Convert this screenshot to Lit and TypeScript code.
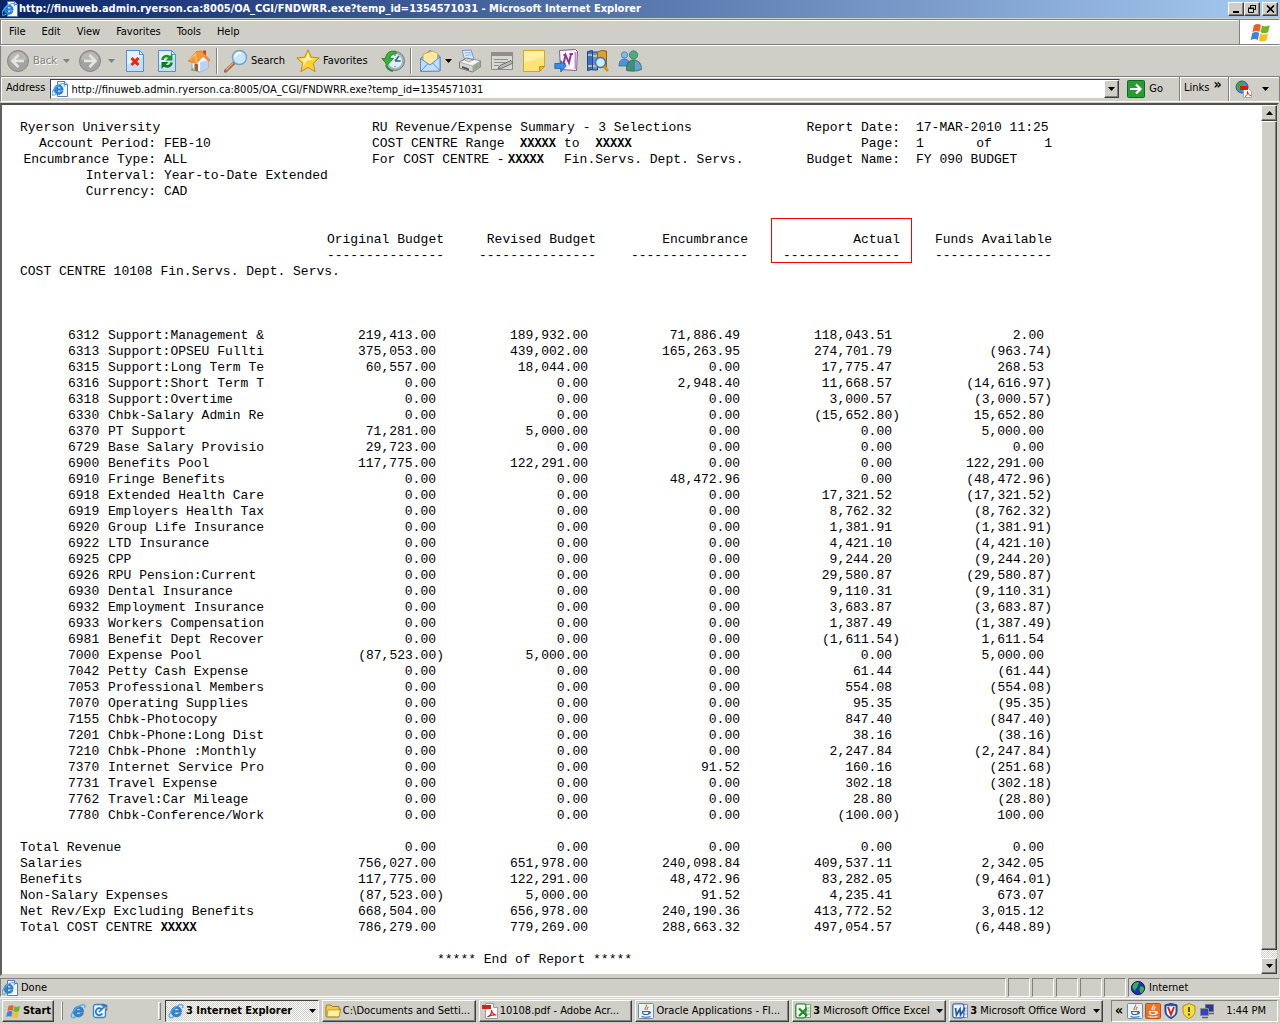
import { LitElement, html, css, svg, nothing, type TemplateResult } from "lit";
import { customElement } from "lit/decorators.js";

const PAGE_URL = "http://finuweb.admin.ryerson.ca:8005/OA_CGI/FNDWRR.exe?temp_id=1354571031";
const COLUMNS = ["Original Budget", "Revised Budget", "Encumbrance", "Actual", "Funds Available"];

const ACCOUNTS = `6312|Support:Management &|219,413.00|189,932.00|71,886.49|118,043.51|2.00
6313|Support:OPSEU Fullti|375,053.00|439,002.00|165,263.95|274,701.79|(963.74)
6315|Support:Long Term Te|60,557.00|18,044.00|0.00|17,775.47|268.53
6316|Support:Short Term T|0.00|0.00|2,948.40|11,668.57|(14,616.97)
6318|Support:Overtime|0.00|0.00|0.00|3,000.57|(3,000.57)
6330|Chbk-Salary Admin Re|0.00|0.00|0.00|(15,652.80)|15,652.80
6370|PT Support|71,281.00|5,000.00|0.00|0.00|5,000.00
6729|Base Salary Provisio|29,723.00|0.00|0.00|0.00|0.00
6900|Benefits Pool|117,775.00|122,291.00|0.00|0.00|122,291.00
6910|Fringe Benefits|0.00|0.00|48,472.96|0.00|(48,472.96)
6918|Extended Health Care|0.00|0.00|0.00|17,321.52|(17,321.52)
6919|Employers Health Tax|0.00|0.00|0.00|8,762.32|(8,762.32)
6920|Group Life Insurance|0.00|0.00|0.00|1,381.91|(1,381.91)
6922|LTD Insurance|0.00|0.00|0.00|4,421.10|(4,421.10)
6925|CPP|0.00|0.00|0.00|9,244.20|(9,244.20)
6926|RPU Pension:Current|0.00|0.00|0.00|29,580.87|(29,580.87)
6930|Dental Insurance|0.00|0.00|0.00|9,110.31|(9,110.31)
6932|Employment Insurance|0.00|0.00|0.00|3,683.87|(3,683.87)
6933|Workers Compensation|0.00|0.00|0.00|1,387.49|(1,387.49)
6981|Benefit Dept Recover|0.00|0.00|0.00|(1,611.54)|1,611.54
7000|Expense Pool|(87,523.00)|5,000.00|0.00|0.00|5,000.00
7042|Petty Cash Expense|0.00|0.00|0.00|61.44|(61.44)
7053|Professional Members|0.00|0.00|0.00|554.08|(554.08)
7070|Operating Supplies|0.00|0.00|0.00|95.35|(95.35)
7155|Chbk-Photocopy|0.00|0.00|0.00|847.40|(847.40)
7201|Chbk-Phone:Long Dist|0.00|0.00|0.00|38.16|(38.16)
7210|Chbk-Phone :Monthly|0.00|0.00|0.00|2,247.84|(2,247.84)
7370|Internet Service Pro|0.00|0.00|91.52|160.16|(251.68)
7731|Travel Expense|0.00|0.00|0.00|302.18|(302.18)
7762|Travel:Car Mileage|0.00|0.00|0.00|28.80|(28.80)
7780|Chbk-Conference/Work|0.00|0.00|0.00|(100.00)|100.00`
  .split("\n")
  .map((line) => line.split("|"));

const TOTALS = `Total Revenue|0.00|0.00|0.00|0.00|0.00
Salaries|756,027.00|651,978.00|240,098.84|409,537.11|2,342.05
Benefits|117,775.00|122,291.00|48,472.96|83,282.05|(9,464.01)
Non-Salary Expenses|(87,523.00)|5,000.00|91.52|4,235.41|673.07
Net Rev/Exp Excluding Benefits|668,504.00|656,978.00|240,190.36|413,772.52|3,015.12
Total COST CENTRE|786,279.00|779,269.00|288,663.32|497,054.57|(6,448.89)`
  .split("\n")
  .map((line) => line.split("|"));

const icon = (size: number, body: unknown, box = size) =>
  html`<svg class="icon" width=${size} height=${size} viewBox="0 0 ${box} ${box}" aria-hidden="true">${body}</svg>`;

/* Blue "e" with its orbit, in a 16-unit box. */
const eMark = svg`
  <path d="M13.6 9.2H6.2c.2 1.5 1.2 2.2 2.4 2.2 1 0 1.600-.4 2-1.100h2.800c-.7 2.300-2.500 3.600-4.900 3.600-3.100 0-5.200-2.200-5.200-5.200S5.500 3.400 8.500 3.400c3.300 0 5.200 2.300 5.100 5.800zM6.300 7.400h4.600c-.1-1.200-1-2-2.300-2s-2.200.8-2.300 2z" fill="#2b86d9" stroke="#1359a8" stroke-width=".5"/>
  <path d="M2.200 14.600C.2 13.800 1.300 10 4.600 6.600 8 3 12.600.8 14.300 2c.8.600.7 1.700.2 2.900" fill="none" stroke="#4fa9ee" stroke-width="1.300"/>
  <path d="M2.200 14.600c1 .3 2.300-.2 3.600-1" fill="none" stroke="#4fa9ee" stroke-width="1.300"/>`;
const ieIcon = () => icon(16, eMark);
const iePage = () => icon(16, svg`
  <path d="M5.500.5h7l3 3v12h-10z" fill="#f4f9ff" stroke="#5b78b8"/><path d="M12.500.5v3h3" fill="#c5d9f4" stroke="#5b78b8"/>
  <g transform="translate(-1 1) scale(.9)">${eMark}</g>`);
const windowsFlag = (size: number) => icon(size, svg`
  <path d="M4 3.500C6 2 8 2.200 9.800 3.200L8.600 9C6.800 8 5 8 2.800 9.200z" fill="#e8602a"/>
  <path d="M10.600 3.600c2 1 4 1 6.400-.2l-1.300 5.800c-2.200 1.200-4.400 1-6.300 0z" fill="#72b52c"/>
  <path d="M2.600 10c2-1.200 4-1.200 5.800-.2L7.200 15.500c-1.800-1-3.700-1-5.900.2z" fill="#3f83dc"/>
  <path d="M9.200 10.200c2 1 4 1.100 6.300 0l-1.300 5.700c-2.200 1.200-4.300 1-6.200 0z" fill="#f3bf22"/>`, 18);
const arrowDown = (tone = "#000") =>
  html`<svg class="arrow" width="7" height="4" viewBox="0 0 7 4" aria-hidden="true"><path d="M0 0h7L3.500 4z" fill=${tone}/></svg>`;

const backIcon = (flip = false) => icon(24, svg`
  <g transform=${flip ? "matrix(-1 0 0 1 24 0)" : "translate(0 0)"}>
  <circle cx="12" cy="12" r="10.500" fill="#a3a3a0" stroke="#858583"/><path d="M3 10a9.300 9.300 0 0 1 18 0c-4 3-13 3-18 0z" fill="#b8b8b5"/>
  <path d="M12.500 6L6.500 12l6 6M7 12h11" fill="none" stroke="#e6e6e1" stroke-width="2.600"/></g>`);
const sheet = svg`
  <path d="M3.500 1.500h13l4 4v17h-17z" fill="#e6f1fd" stroke="#4c8fe0"/><path d="M4 16l16-9v15H4z" fill="#c5dffa"/><path d="M16.500 1.500v4h4z" fill="#fff" stroke="#4c8fe0"/>`;
const stopIcon = () => icon(24, svg`${sheet}<path d="M8.500 9l7 7M15.500 9l-7 7" stroke="#e8260c" stroke-width="3"/>`);
const refreshIcon = () => icon(24, svg`${sheet}
  <path d="M7.500 11c.3-4 5-5 7.500-2.600" fill="none" stroke="#189a22" stroke-width="2.600"/><path d="M17.500 4.500v7h-7z" fill="#189a22"/>
  <path d="M16.500 13.500c-.3 4-5 5-7.500 2.600" fill="none" stroke="#0e7c18" stroke-width="2.600"/><path d="M6.500 20v-7h7z" fill="#0e7c18"/>`);
const homeIcon = () => icon(24, svg`
  <path d="M16 1.500h3v6h-3z" fill="#c8451c"/><path d="M5 12v9l8 2 8-4v-8l-6-6z" fill="#f3f7fd" stroke="#8ba4cc"/>
  <path d="M13 13v10l8-4v-8z" fill="#bcd4f2"/><path d="M7.500 14.500l3.500.8v7l-3.500-.9z" fill="#9a6232"/>
  <path d="M1 12L9.500 2.500l5-.5L23 11l-1.500 1-5.500-5-6.500 7.500z" fill="#f49a35" stroke="#d7721c" stroke-width=".7"/>
  <path d="M1 12L9 3.500l1 11-1.500-1L8 7z" fill="#f9bf76"/><path d="M3.500 21.500l3-3v3z" fill="#5cb033"/>`);
const searchIcon = () => icon(24, svg`
  <path d="M10 14l-8.500 8" stroke="#a66a48" stroke-width="3.400" stroke-linecap="round"/><path d="M9 14l-7 7" stroke="#e1ae8d" stroke-width="1.200"/>
  <circle cx="15.500" cy="8.500" r="7" fill="#c7e7fb" stroke="#759fd2" stroke-width="1.500"/><path d="M11 8c0-3 3-4.800 6-3.800" stroke="#fff" stroke-width="2.200" fill="none"/>`);
const starIcon = () => icon(24, svg`
  <path d="M12 .8l3.200 7.400 8 .7-6 5.400 1.900 8.300L12 18.400 4.900 22.600l1.900-8.300-6-5.400 8-.7z" fill="#fbd231" stroke="#c58b12"/>
  <path d="M12 3.500l2.300 5.800 5.500.6-8.500 1.800-5 6.300 1.500-5.200L4 9.900l5.700-.6z" fill="#fff3a0"/>`);
const historyIcon = () => icon(24, svg`
  <circle cx="14" cy="12" r="9.500" fill="#a8b2bc" stroke="#6f7f8e"/><circle cx="14" cy="12" r="7" fill="#dceef8"/>
  <path d="M14 12l4-5M14 12h5" stroke="#425a70" stroke-width="1.500"/><path d="M14 6v1M14 17v1M20 12h-1" stroke="#425a70"/>
  <path d="M15 2.500C9 .8 5 4 4.500 9.500H.8L6.500 16l6-6.500H9C9.300 6.500 11.500 5 15 5z" fill="#3cae3a" stroke="#1c7d23" stroke-width=".8"/>
  <path d="M5 16c1 3.500 4 5.500 7 6" fill="none" stroke="#2b9430" stroke-width="2"/>`);
const mailIcon = () => icon(24, svg`
  <path d="M2.500 9.500L12 1.500l10 6v14l-19 1z" fill="#8fbdf0" stroke="#4f7fc4"/><path d="M5 5l10-3 4.500 2.500V14L12 17l-7-5z" fill="#fde9a5" stroke="#dca637"/>
  <path d="M2.500 9.500L12 16l10-8v14l-19.500.5z" fill="#c2def9" stroke="#5a8bd0"/><path d="M3 22l7-7.500M22 21.500l-7.500-7.500" stroke="#5a8bd0" fill="none"/>`);
const printIcon = () => icon(24, svg`
  <path d="M4 1.500l9-.5 3 9-9 2z" fill="#d8eaff" stroke="#6c99d8"/><path d="M6.500 4l6-.5M7.500 6.500l6-.8" stroke="#8eb4e8"/>
  <path d="M1.500 13l7-4 14 3v6l-8 5-13-4z" fill="#d5d5d3" stroke="#777"/><path d="M1.500 13l13 4 8-5-6-1.500-6 2.500-4-2z" fill="#f5f5f3" stroke="#888" stroke-width=".6"/>
  <path d="M14.500 17v6l8-5v-6z" fill="#a2a2a0"/><path d="M4 17l7 2.500v2L4 19z" fill="#555"/><path d="M16 19l4-2.500" stroke="#5fc24c" stroke-width="1.200"/>`);
const editIcon = () => icon(24, svg`
  <path d="M1.500 3.500h21v17h-21z" fill="#d9d9d4" stroke="#8c8c88"/><path d="M1 3h22v4H1z" fill="#8f8f8b"/>
  <path d="M4 10.500h14M4 13.500h11M4 16.500h5" stroke="#8d8d88"/><path d="M8 19.500l2-3 11-5 2 2.500-11 5.200z" fill="#bababa" stroke="#6f6f6c"/>`);
const noteIcon = () => icon(24, svg`
  <path d="M1.500 1.500h21v16l-5 5h-16z" fill="#fee477" stroke="#d9a520"/><path d="M2 2h20v6L2 14z" fill="#fff0a2"/><path d="M17.500 22.500v-5h5z" fill="#f4b52a" stroke="#c98d12"/>`);
const oneNoteIcon = () => icon(24, svg`
  <path d="M5.500 1.500l16-1 2 2-1 19-16-1z" fill="#fbf6fc" stroke="#8a5a96"/><path d="M21.500 3v17" stroke="#b693be" stroke-width="1.800"/>
  <path d="M9.500 15l2-9 3.500 8 2-9M9.500 6h3M15.500 5H19M8 15h3.500" fill="none" stroke="#843c8d" stroke-width="1.900"/>
  <path d="M.8 14.500h6v-3l5.500 5.500-5.500 6v-3.500h-6z" fill="#3c8be6" stroke="#1d5cb2" stroke-width=".8"/>`);
const researchIcon = () => icon(24, svg`
  <path d="M1.500 2.500l5-1v19l-5 1z" fill="#3d6fc2" stroke="#24478a"/><path d="M6.500 3h5v18h-5z" fill="#5e92dc" stroke="#24478a"/>
  <path d="M11.500 3l4-1.500 5 .5v16h-9z" fill="#d9a03c" stroke="#8d621f"/><path d="M2 6h4M7 7h4M2 17h4M7 17h4" stroke="#f5d46b" stroke-width="1.400"/>
  <circle cx="14.500" cy="13.500" r="5" fill="#c9ebfc" stroke="#45719f" stroke-width="1.400"/><path d="M18 17.500l4 4.500" stroke="#c8952e" stroke-width="2.800"/>`);
const messengerIcon = () => icon(24, svg`
  <circle cx="6.500" cy="6" r="3.200" fill="#7fb9e6" stroke="#3c76ac" stroke-width=".7"/><path d="M1 17c0-5 2-7 5.500-7s5 2 5 7z" fill="#4f93d2" stroke="#2f68a4" stroke-width=".7"/>
  <circle cx="15.500" cy="6" r="4.200" fill="#55a87c" stroke="#2b6e5a" stroke-width=".7"/>
  <path d="M8.500 21.500c-.5-7 2-10.500 7-10.500s8 3.500 8 9.500c-5 2-10 2-15 1z" fill="#3f9078" stroke="#2b5f68" stroke-width=".7"/>
  <path d="M17 12c4 1 6 4 6 8l-6 1.500z" fill="#6ba2d6"/>`);
const goIcon = () => icon(18, svg`<rect x=".5" y=".5" width="17" height="17" rx="1" fill="#299a35" stroke="#0f6a1c"/><path d="M3 9h10M9 4.500L13.500 9 9 13.500" fill="none" stroke="#fff" stroke-width="2.200"/>`);
const globe = svg`
  <circle cx="8" cy="8" r="6.600" fill="#1c34b8" stroke="#0c1768"/><path d="M3 5c2-3 5-3.500 6-2.500S7 5 7.500 6.500 5 8 5.500 10 3 9 2.500 8zM10 7c2-1 3.500 0 4 1s-1 4.500-2.500 5S10 11 9.500 10z" fill="#35b53c"/>`;
const pdfGlobe = () => icon(18, svg`
  <circle cx="7" cy="7" r="6" fill="#4f87cf" stroke="#2a5690"/><path d="M1.500 6c1-4 5-5 7-4S6 4 6.500 6 4 7 4.500 10 2 9 1.500 6z" fill="#3fa83e"/>
  <path d="M8.500 8.500h5l3 3v6h-8z" fill="#fff" stroke="#999" stroke-width=".8"/><path d="M5 6h8v4H5z" fill="#d81a16"/>
  <path d="M10 16.500c2-1 3-3 2.500-5 .3 2 1 3.500 3.500 4" fill="none" stroke="#d81a16"/>`);
const folderIcon = () => icon(16, svg`<path d="M1 3.500l1-1.500h4l1.500 1.500H14V6h1.500L14 14H1.500L1 13z" fill="#f2c94a" stroke="#a57c12"/><path d="M3 7h12.300L14 13.700H2z" fill="#fff1a3" stroke="#b88c1c" stroke-width=".7"/>`);
const pdfIcon = () => icon(16, svg`<path d="M3.500.5h8l4 4v11h-12z" fill="#fff" stroke="#9a9a9a"/><path d="M11.500.5v4h4" fill="#ddd" stroke="#999"/><path d="M0 2h9v4H0z" fill="#d6201c"/><path d="M5.500 14c3-1.500 4.500-4 4-7 .3 3 1.500 4.500 5 5-3-.5-6.500.3-9 2z" fill="none" stroke="#d6201c" stroke-width="1.200"/>`);
const javaIcon = (back = "#eaf1f7", edge = "#6d8ba8", steam = "#dc6b22", cup = "#3d6690") => icon(16, svg`
  <rect x=".5" y=".5" width="15" height="15" rx="1" fill=${back} stroke=${edge}/><path d="M8.500 1.500c1.500 2-3 3-1 5.500M10.500 4c-2 1-1 2-1.500 3" fill="none" stroke=${steam} stroke-width="1.100"/>
  <path d="M4.500 8.500h6.500c0 2-.7 3-1.500 3h-3c-1 0-2-1-2-3zM11 9c2-.5 2 1.500-.7 2M3.500 13.500c2 1 7 1 9 0" fill="none" stroke=${cup} stroke-width="1.100"/>`);
const excelIcon = () => icon(16, svg`<path d="M5.500 1.500h10v13h-10z" fill="#f3faf2" stroke="#6fa46b"/><path d="M11 5h4M11 8h4M11 11h4" stroke="#82b37e"/><rect x=".8" y=".8" width="10" height="14" rx="2" fill="#f2faef" stroke="#2f8b33" stroke-width="1.300"/><path d="M4 5.500l8 7.500M11.500 5.500L4 13" stroke="#23852c" stroke-width="2.200"/>`);
const wordIcon = () => icon(16, svg`<path d="M5.500 1.500h10v13h-10z" fill="#f3f7fd" stroke="#6d8cc2"/><path d="M12 5h3M12 8h3M12 11h3" stroke="#7f9dd0"/><rect x=".8" y=".8" width="11" height="14" rx="2" fill="#eef4fd" stroke="#3c66b4" stroke-width="1.300"/><path d="M3.500 5l1 7L8 6l.5 6L13 5" fill="none" stroke="#2453a8" stroke-width="1.700"/>`);
const outlookIcon = () => icon(16, svg`<rect x="1.500" y="1.500" width="12" height="13" rx="2" fill="#e6f3fe" stroke="#2c86cf" stroke-width="1.300"/><path d="M10 6.500a3.500 3.500 0 1 0 .3 4" fill="none" stroke="#2276c4" stroke-width="1.700"/><path d="M7 9l6-6M9.500 2.500h5v5" fill="none" stroke="#2276c4" stroke-width="1.600"/><path d="M13 3l2.500 2-2 2z" fill="#ee8b28"/>`);
const shieldV = () => icon(16, svg`<path d="M2 2l6-1.500L14 2v6c0 4-3 6-6 7.500C5 14 2 12 2 8z" fill="#2b5ea8" stroke="#183c78"/><path d="M3.500 3.200h9V8c0 3-2 4.800-4.500 6-2.500-1.200-4.500-3-4.500-6z" fill="#fff"/><path d="M5 4l3 7.500L11 4" fill="none" stroke="#d3201b" stroke-width="2"/>`);
const shieldWarn = () => icon(16, svg`<path d="M2 3l6-2.500L14 3v5c0 4-3 6-6 7.500C5 14 2 12 2 8z" fill="#f7dc3c" stroke="#a78f18"/><path d="M8 4v5M8 10.500v2" stroke="#333" stroke-width="1.600"/>`);
const networkIcon = () => icon(16, svg`<path d="M6.500 1.500h8v7h-8z" fill="#26389a" stroke="#777"/><path d="M1.500 5.500h8v7h-8z" fill="#3247b8" stroke="#8a8a90"/><path d="M3 14.500h6M10 10.500h5" stroke="#666" stroke-width="1.600"/>`);
const captionGlyph = (d: string, w = "1") => html`<svg width="11" height="10" viewBox="0 0 11 10" aria-hidden="true"><path d=${d} fill="none" stroke="#000" stroke-width=${w}/></svg>`;

const tool = (label: string, image: TemplateResult, kind = "", text = false) =>
  html`<button class="tool ${kind}" aria-label=${label}>${image}${text ? html`<span>${label}</span>` : nothing}</button>`;

@customElement("app-root")
export class AppRoot extends LitElement {
  static styles = css`
    :host { display: block; font: 11px/14px "DejaVu Sans Condensed", "DejaVu Sans", sans-serif; color: #000; }
    * { box-sizing: border-box; }
    button, input { font: inherit; color: inherit; border: 0; margin: 0; padding: 0; background: none; border-radius: 0; }
    button { display: flex; align-items: center; white-space: nowrap; }
    a { color: inherit; text-decoration: none; }
    svg { display: block; flex: none; }
    .window { min-height: 100vh; display: flex; flex-direction: column; background: #d0cfc7; }
    .raised { background: #d0cfc7; border: 1px solid; border-color: #fff #404040 #404040 #fff; box-shadow: inset -1px -1px #808080; justify-content: center; }

    .title { display: flex; align-items: center; height: 18px; padding: 0 2px; color: #fff; font-weight: bold;
      background: linear-gradient(90deg, #0a246a, #a6caf0); }
    .title h1 { flex: 1; margin: 0 0 0 1px; font: inherit; white-space: nowrap; overflow: hidden; }
    .title .raised { width: 16px; height: 14px; }
    .title .close { margin-left: 2px; }

    .menubar { display: flex; height: 26px; margin-top: 1px; border: 1px solid #808080; border-right-color: #fff; box-shadow: inset 1px 1px #fff; }
    .menus { flex: 1; display: flex; align-items: center; gap: 16px; padding-left: 8px; border-right: 1px solid #808080; }
    .brand { width: 39px; display: flex; align-items: center; justify-content: center; background: #fff; }

    .toolbar { display: flex; align-items: center; gap: 8px; height: 31px; padding-left: 5px; border-top: 1px solid #fff; border-left: 1px solid #808080; }
    .tool { gap: 3px; }
    .tool.off { color: #808080; text-shadow: 1px 1px #fff; }
    .tool.back { width: 64px; }
    .tool.forward { width: 37px; }
    .tool.find { width: 64px; }
    .tool.fav { width: 77px; }
    .tool.mail { width: 32px; }
    .tool .arrow { margin-left: auto; }
    .rule { width: 2px; height: 26px; margin: 0 -2px 0 -3px; border-left: 1px solid #808080; border-right: 1px solid #fff; }

    .address { display: flex; align-items: stretch; height: 26px; padding-left: 5px; border: 1px solid #808080; border-bottom-color: #fff; box-shadow: inset 1px 1px #fff; }
    .address > label { padding: 4px 5px 0 0; }
    .field { flex: 1; display: flex; align-items: center; margin: 2px 0; padding-left: 1px; gap: 3px; background: #fff; border: 1px solid; border-color: #404040 #d0cfc7 #d0cfc7 #404040; }
    .field input { flex: 1; min-width: 0; height: 16px; outline: 0; }
    .field .raised { width: 15px; align-self: stretch; }
    .go { gap: 4px; padding: 0 16px 0 7px; }
    .links { display: flex; gap: 4px; width: 49px; padding: 4px 0 0 4px; border-left: 1px solid #808080; box-shadow: inset 1px 0 #fff; }
    .more { font: bold 14px/14px "DejaVu Sans Condensed", sans-serif; }
    .links .more { margin-top: -4px; }
    .plug { gap: 9px; width: 51px; padding-left: 6px; border-left: 1px solid #808080; box-shadow: inset 1px 0 #fff; }

    .view { flex: 1; display: flex; margin: 1px 1px 0 0; background: #fff; border: 2px solid; border-color: #505050 #d0cfc7 #d0cfc7 #606060; }
    .report { flex: 1; min-width: 0; padding: 15px 18px 0; font: 13px/16px "Liberation Mono", monospace; }
    .scroll { display: flex; flex-direction: column; width: 16px; background: repeating-conic-gradient(#d0cfc7 0 25%, #fff 0 50%) 0 0 / 2px 2px; }
    .scroll button { height: 16px; }
    .thumb { flex: 1; margin-bottom: 8px; }

    .head { display: grid; grid-template-columns: 352px 432px 248px; white-space: pre; }
    .pairs { display: grid; grid-template-columns: 136px 1fr; gap: 0 8px; margin: 0; align-content: start; }
    .pairs.right { grid-template-columns: 96px 136px; column-gap: 16px; }
    .pairs dt { text-align: right; }
    .pairs dd { margin: 0; }
    .pairs .wide { grid-column: 1 / -1; text-align: left; }
    .paging { display: flex; justify-content: space-between; }
    .ranges { display: grid; grid-template-columns: 136px 56px 1fr; align-content: start; }
    .ranges .wide { grid-column: 1 / -1; }
    .mask { font: bold 12px/16px "Liberation Mono", monospace; }
    .inset { padding-left: 12px; }
    .gap { margin-left: 16px; }
    .near { margin-left: 8px; }

    table { width: 1032px; table-layout: fixed; border-collapse: collapse; margin-top: 32px; }
    .code { width: 88px; }
    .name { width: 184px; }
    .amount { width: 152px; }
    th, td { padding: 0; font-weight: normal; text-align: left; white-space: nowrap; }
    .col { text-align: right; position: relative; }
    .marker { position: absolute; top: -14px; left: 23px; right: -12px; height: 45px; border: 1px solid #ff0000; }
    .num { text-align: right; padding-right: 8px; }
    .num.neg { padding-right: 0; }
    .acct { padding-left: 48px; }
    .centre th { padding-bottom: 48px; }
    .sums::before { content: ""; display: table-row; height: 16px; }
    .end { margin: 16px 0 4px; padding-left: 417px; }

    .status { display: flex; gap: 2px; height: 19px; margin-top: 2px; }
    .pane { width: 22px; border: 1px solid; border-color: #808080 #fff #fff #808080; }
    .pane.wide { flex: 1; display: flex; align-items: center; gap: 3px; padding-left: 1px; }
    .pane.zone { width: 152px; display: flex; align-items: center; gap: 3px; padding-left: 1px; }

    .taskbar { display: flex; align-items: flex-start; height: 26px; margin-top: 1px; padding: 1px 2px 0; border-top: 1px solid #fff; }
    .taskbar .start { width: 52px; height: 22px; gap: 2px; font-weight: bold; }
    .grip { width: 3px; height: 18px; margin-top: 2px; border: 1px solid; border-color: #fff #808080 #808080 #fff; }
    .quick { display: flex; gap: 6px; width: 97px; margin: 2px 0 0 7px; padding: 1px 0 1px 8px; }
    .tasks { flex: 1; display: flex; gap: 3px; min-width: 0; margin: 0 8px 0 4px; }
    .task { flex: 1 1 0; min-width: 0; height: 22px; padding: 0 2px; gap: 2px; justify-content: flex-start; }
    .task span { overflow: hidden; text-overflow: ellipsis; }
    .task .arrow { margin-left: auto; }
    .task.active { font-weight: bold; border-color: #404040 #fff #fff #404040; box-shadow: none;
      background: repeating-conic-gradient(#d0cfc7 0 25%, #fff 0 50%) 0 0 / 2px 2px; }
    .quick { border-left: 1px solid #fff; box-shadow: inset 1px 0 #808080; }
    .tray { display: flex; align-items: center; gap: 2px; width: 167px; height: 22px; padding: 0 11px 0 3px; border: 1px solid; border-color: #808080 #fff #fff #808080; }
    .tray .more { margin: -2px 2px 0 0; }
    .tray time { margin-left: auto; white-space: nowrap; }
  `;

  private amount(value: string) {
    return html`<td class="num ${value.startsWith("(") ? "neg" : ""}">${value}</td>`;
  }

  private task(label: string, image: TemplateResult, count = "", active = false) {
    return html`<button class="task raised ${active ? "active" : ""}">${image}<span>${count ? html`<b>${count}</b> ` : nothing}${label}</span>${count ? arrowDown() : nothing}</button>`;
  }

  private report() {
    return html`
      <main class="report">
        <header class="head">
          <dl class="pairs">
            <dt class="wide">Ryerson University</dt>
            <dt>Account Period:</dt><dd>FEB-10</dd>
            <dt>Encumbrance Type:</dt><dd>ALL</dd>
            <dt>Interval:</dt><dd>Year-to-Date Extended</dd>
            <dt>Currency:</dt><dd>CAD</dd>
          </dl>
          <div class="ranges">
            <span class="wide">RU Revenue/Expense Summary - 3 Selections</span>
            <span>COST CENTRE Range</span><span class="mask inset">XXXXX</span><span>to<span class="mask gap">XXXXX</span></span>
            <span>For COST CENTRE -</span><span class="mask">XXXXX</span><span>Fin.Servs. Dept. Servs.</span>
          </div>
          <dl class="pairs right">
            <dt>Report Date:</dt><dd>17-MAR-2010 11:25</dd>
            <dt>Page:</dt><dd class="paging"><span>1</span><span>of</span><span>1</span></dd>
            <dt>Budget Name:</dt><dd>FY 090 BUDGET</dd>
          </dl>
        </header>
        <table>
          <colgroup><col class="code"><col class="name">${COLUMNS.map(() => html`<col class="amount">`)}</colgroup>
          <thead>
            <tr><td colspan="2"></td>${COLUMNS.map((name) => html`<th class="col" scope="col">${name}${name === "Actual" ? html`<div class="marker"></div>` : nothing}</th>`)}</tr>
            <tr><td colspan="2"></td>${COLUMNS.map(() => html`<td class="col">---------------</td>`)}</tr>
            <tr class="centre"><th colspan="7">COST CENTRE 10108 Fin.Servs. Dept. Servs.</th></tr>
          </thead>
          <tbody>
            ${ACCOUNTS.map(([code, name, ...values]) => html`<tr><td class="acct">${code}</td><th scope="row">${name}</th>${values.map((v) => this.amount(v))}</tr>`)}
          </tbody>
          <tbody class="sums">
            ${TOTALS.map(([name, ...values]) => html`<tr><th scope="row" colspan="2">${name}${name === "Total COST CENTRE" ? html`<span class="mask near">XXXXX</span>` : nothing}</th>${values.map((v) => this.amount(v))}</tr>`)}
          </tbody>
        </table>
        <p class="end">***** End of Report *****</p>
      </main>`;
  }

  render() {
    return html`
      <div class="window">
        <header class="title">
          ${iePage()}<h1>${PAGE_URL} - Microsoft Internet Explorer</h1>
          <button class="raised" aria-label="Minimize">${captionGlyph("M2 8h6", "2")}</button>
          <button class="raised" aria-label="Restore">${captionGlyph("M3.500 4V1.500h5v4H7M3 1.500h6M1.500 4.500h5v4h-5zM1 4h6")}</button>
          <button class="raised close" aria-label="Close">${captionGlyph("M2 1.500l7 7M9 1.500l-7 7", "1.600")}</button>
        </header>
        <div class="menubar">
          <nav class="menus">${["File", "Edit", "View", "Favorites", "Tools", "Help"].map((m) => html`<button>${m}</button>`)}</nav>
          <div class="brand">${windowsFlag(22)}</div>
        </div>
        <div class="toolbar">
          <button class="tool off back">${backIcon()}<span>Back</span>${arrowDown("#808080")}</button>
          <button class="tool off forward" aria-label="Forward">${backIcon(true)}${arrowDown("#808080")}</button>
          ${tool("Stop", stopIcon())}${tool("Refresh", refreshIcon())}${tool("Home", homeIcon())}
          <i class="rule"></i>
          ${tool("Search", searchIcon(), "find", true)}${tool("Favorites", starIcon(), "fav", true)}${tool("History", historyIcon())}
          <i class="rule"></i>
          <button class="tool mail" aria-label="Mail">${mailIcon()}${arrowDown()}</button>
          ${tool("Print", printIcon())}${tool("Edit page", editIcon())}${tool("Discuss", noteIcon())}${tool("Send to OneNote", oneNoteIcon())}${tool("Research", researchIcon())}${tool("Messenger", messengerIcon())}
        </div>
        <div class="address">
          <label for="url">Address</label>
          <div class="field">${iePage()}<input id="url" type="text" .value=${PAGE_URL}><button class="raised" aria-label="Show addresses">${arrowDown()}</button></div>
          <button class="go">${goIcon()}Go</button>
          <div class="links"><a href="#links">Links</a><span class="more">»</span></div>
          <button class="plug" aria-label="Convert to PDF">${pdfGlobe()}${arrowDown()}</button>
        </div>
        <div class="view">
          ${this.report()}
          <div class="scroll">
            <button class="raised" aria-label="Scroll up"><svg width="7" height="4" viewBox="0 0 7 4"><path d="M0 4h7L3.500 0z"/></svg></button>
            <div class="thumb raised"></div>
            <button class="raised" aria-label="Scroll down">${arrowDown()}</button>
          </div>
        </div>
        <footer class="status">
          <div class="pane wide">${iePage()}Done</div>
          ${[1, 2, 3, 4, 5].map(() => html`<div class="pane"></div>`)}
          <div class="pane zone">${icon(16, globe)}Internet</div>
        </footer>
        <div class="taskbar">
          <button class="start raised">${windowsFlag(16)}Start</button>
          <div class="quick">${tool("Internet Explorer", ieIcon())}${tool("Outlook", outlookIcon())}</div>
          <i class="grip"></i>
          <div class="tasks">
            ${this.task("Internet Explorer", ieIcon(), "3", true)}
            ${this.task("C:\\Documents and Setti...", folderIcon())}
            ${this.task("10108.pdf - Adobe Acr...", pdfIcon())}
            ${this.task("Oracle Applications - FI...", javaIcon())}
            ${this.task("Microsoft Office Excel", excelIcon(), "3")}
            ${this.task("Microsoft Office Word", wordIcon(), "3")}
          </div>
          <div class="tray"><span class="more">«</span>${javaIcon()}${javaIcon("#e8742c", "#b9501a", "#fff", "#fff")}${shieldV()}${shieldWarn()}${networkIcon()}<time>1:44 PM</time></div>
        </div>
      </div>`;
  }
}
